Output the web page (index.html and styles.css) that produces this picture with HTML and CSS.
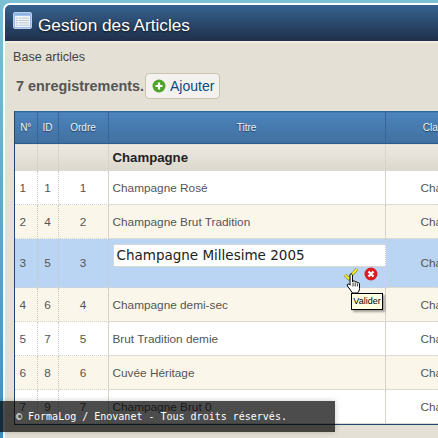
FILE: index.html
```html
<!DOCTYPE html>
<html lang="fr">
<head>
    <meta charset="UTF-8">
    <title>Gestion des Articles</title>
    <link rel="stylesheet" href="styles.css">
</head>
<body>
    <div class="window">
        <header class="title-bar">
            <svg class="title-icon" width="19" height="17" viewBox="0 0 20 18">
                <rect x="0.5" y="0.5" width="19" height="17" rx="1.5" fill="#8fb4e6" stroke="#c4d8f5"/>
                <rect x="2" y="4" width="16" height="12" fill="#f2f6fb"/>
                <path d="M6 6.5h11M6 9h11M6 11.5h11M6 14h11" stroke="#b9c4d4" stroke-width="1"/>
                <path d="M3 6.5h2M3 9h2M3 11.5h2M3 14h2" stroke="#9db7dc" stroke-width="1"/>
            </svg>
            <h1>Gestion des Articles</h1>
        </header>

        <div class="content">
            <p class="crumb">Base articles</p>
            <div class="toolbar">
                <span class="count">7 enregistrements.</span>
                <a class="btn-add" href="#">
                    <svg width="14" height="14" viewBox="0 0 14 14">
                        <circle cx="7" cy="7" r="6.5" fill="#4fa32b"/>
                        <path d="M7 3.5v7M3.5 7h7" stroke="#fff" stroke-width="2.2"/>
                    </svg>
                    Ajouter
                </a>
            </div>

            <div class="table-wrap">
                <table class="grid">
                    <colgroup>
                        <col class="col-num">
                        <col class="col-id">
                        <col class="col-order">
                        <col class="col-title">
                        <col class="col-class">
                    </colgroup>
                    <thead>
                        <tr>
                            <th>N°</th>
                            <th>ID</th>
                            <th>Ordre</th>
                            <th>Titre</th>
                            <th>Classe</th>
                        </tr>
                    </thead>
                    <tbody>
                        <tr class="group">
                            <td></td><td></td><td></td>
                            <td class="left">Champagne</td>
                            <td></td>
                        </tr>
                        <tr>
                            <td class="num">1</td><td>1</td><td>1</td>
                            <td class="left">Champagne Rosé</td>
                            <td class="left cls">Champagne</td>
                        </tr>
                        <tr class="alt">
                            <td class="num">2</td><td>4</td><td>2</td>
                            <td class="left">Champagne Brut Tradition</td>
                            <td class="left cls">Champagne</td>
                        </tr>
                        <tr class="editing">
                            <td class="num">3</td><td>5</td><td>3</td>
                            <td class="left edit-cell">
                                <div class="edit-box">Champagne Millesime 2005</div>
                                <div class="edit-actions">
                                    <svg width="16" height="14" viewBox="0 0 16 14">
                                        <path d="M2 8l3.5 3.5L14 2" fill="none" stroke="#6b6b20" stroke-width="3"/>
                                        <path d="M2 8l3.5 3.5L14 2" fill="none" stroke="#f2ee2a" stroke-width="2"/>
                                    </svg>
                                    <svg width="14" height="14" viewBox="0 0 14 14">
                                        <circle cx="7" cy="7" r="6.5" fill="#d81e1e"/>
                                        <path d="M4.5 4.5l5 5M9.5 4.5l-5 5" stroke="#fff" stroke-width="2.2"/>
                                    </svg>
                                </div>
                            </td>
                            <td class="left cls">Champagne</td>
                        </tr>
                        <tr class="alt">
                            <td class="num">4</td><td>6</td><td>4</td>
                            <td class="left">Champagne demi-sec</td>
                            <td class="left cls">Champagne</td>
                        </tr>
                        <tr>
                            <td class="num">5</td><td>7</td><td>5</td>
                            <td class="left">Brut Tradition demie</td>
                            <td class="left cls">Champagne</td>
                        </tr>
                        <tr class="alt">
                            <td class="num">6</td><td>8</td><td>6</td>
                            <td class="left">Cuvée Héritage</td>
                            <td class="left cls">Champagne</td>
                        </tr>
                        <tr>
                            <td class="num">7</td><td>9</td><td>7</td>
                            <td class="left">Champagne Brut 0</td>
                            <td class="left cls">Champagne</td>
                        </tr>
                    </tbody>
                </table>
            </div>
        </div>
    </div>

    <!-- curseur et infobulle au-dessus du tableau -->
    <svg class="cursor" width="18" height="22" viewBox="0 0 18 22">
        <path d="M4 1.5c1-1 2.500-.5 2.500 1V9l.5-1c1-.5 2 0 2 1 1-.7 2.200-.2 2.200.8 1-.5 2.300 0 2.300 1.200v4.500c0 2-1 3.500-2 4.500H6.500L1.500 13c-1-1.500.5-2.500 1.500-1.800l1 1V2.500z" fill="#fff" stroke="#000" stroke-width="1"/>
        <path d="M7 9.500v4M9.200 9.500v4M11.400 10.500v3" stroke="#000" stroke-width=".8"/>
    </svg>
    <div class="tooltip">Valider</div>

    <footer class="legal">© FormaLog / Enovanet - Tous droits réservés.</footer>
</body>
</html>
```

FILE: styles.css
```css
html, body {
    margin: 0;
    padding: 0;
    height: 438px;
    overflow: hidden;
}
body {
    position: relative;
    font-family: "Liberation Sans", Arial, sans-serif;
    background: linear-gradient(#7cc0d6, #3f8fc0);
    padding: 3px 0 0 3px;
    box-sizing: border-box;
}
.window {
    height: 435px;
    background-color: #e4e0d5;
    border-top: 2px solid #fff;
    border-left: 2px solid #fff;
    border-top-left-radius: 7px;
    overflow: hidden;
}
.title-bar {
    display: flex;
    align-items: center;
    gap: 6px;
    height: 36px;
    padding: 0 0 0 8px;
    background: linear-gradient(#36638f, #1f2f4b);
    border-bottom: 2px solid #f3ecdd;
}
.title-icon {
    margin-top: -5px;
}
.title-bar h1 {
    margin: 4px 0 0;
    font-size: 17.2px;
    font-weight: normal;
    color: #fff;
    text-shadow: 0 1px 2px #111;
}
.content {
    padding: 0 0 0 8px;
}
.crumb {
    margin: 0;
    padding-top: 7px;
    height: 15px;
    font-size: 12.6px;
    line-height: 15px;
    color: #444;
}
.toolbar {
    display: flex;
    align-items: center;
    height: 26px;
    margin-top: 8px;
    padding-left: 3px;
}
.count {
    font-size: 14.4px;
    font-weight: bold;
    color: #555;
}
.btn-add {
    display: flex;
    align-items: center;
    gap: 4px;
    height: 24px;
    margin-left: 1px;
    padding: 0 5px 0 6px;
    border: 1px solid #c9c4ad;
    border-radius: 4px;
    background-color: #f3f2ee;
    color: #0b4a82;
    font-size: 14px;
    text-decoration: none;
}
.table-wrap {
    margin-top: 12px;
    margin-left: 1px;
    overflow: hidden;
    border-left: 1px solid #24466e;
    border-bottom: 1px solid #24466e;
    width: 476px;
}
.grid {
    table-layout: fixed;
    border-collapse: collapse;
    width: 476px;
    font-size: 10px;
}
.col-num { width: 22px; }
.col-id { width: 21px; }
.col-order { width: 50px; }
.col-title { width: 277px; }
.col-class { width: 106px; }
.grid th {
    height: 32px;
    padding: 0;
    box-sizing: border-box;
    background: linear-gradient(#4c84bd, #41709f);
    border-top: 1px solid #2f689f;
    border-bottom: 1px solid #2b5c8f;
    border-right: 1px solid #34689d;
    color: #f0f4f8;
    font-weight: normal;
    text-shadow: 0 1px 1px #1c3a5c;
}
.grid td {
    height: 34px;
    padding: 0;
    box-sizing: border-box;
    text-align: center;
    border-right: 1px dotted #c9c9c4;
    border-bottom: 1px dotted #d5d5d0;
    background-color: #fff;
    color: #555;
    font-size: 11.8px;
    vertical-align: middle;
}
.grid td.num {
    padding-right: 6px;
}
.grid td.left {
    text-align: left;
    padding-left: 4px;
    white-space: nowrap;
    overflow: hidden;
}
.grid td.cls {
    padding-left: 35px;
}
.grid .alt td {
    background-color: #faf7ea;
}
.grid .group td {
    height: 27px;
    background: linear-gradient(#ede9e1, #dcd8cd);
    color: #222;
    font-size: 13.2px;
    font-weight: bold;
}
.grid .editing td {
    height: 49px;
    background-color: #b9d5f3;
}
.grid td.edit-cell {
    vertical-align: top;
    overflow: visible;
}
.edit-box {
    box-sizing: border-box;
    width: 274px;
    height: 23px;
    margin-top: 5px;
    padding-left: 3px;
    background-color: #fff;
    border: 1px solid #d8d8d0;
    border-radius: 2px;
    font-family: "DejaVu Sans", sans-serif;
    font-size: 13.5px;
    line-height: 21px;
    color: #222;
}
.edit-actions {
    display: flex;
    justify-content: flex-end;
    align-items: center;
    gap: 5px;
    width: 265px;
}
.cursor {
    position: absolute;
    left: 346px;
    top: 273px;
}
.tooltip {
    position: absolute;
    left: 351px;
    top: 293px;
    box-sizing: border-box;
    width: 32px;
    height: 17px;
    border: 1px solid #000;
    background-color: #ffffe1;
    box-shadow: 2px 2px 2px rgba(0, 0, 0, 0.35);
    font-size: 9px;
    line-height: 15px;
    text-align: center;
    color: #000;
}
.legal {
    position: absolute;
    left: 0;
    top: 401px;
    box-sizing: border-box;
    width: 335px;
    height: 31px;
    padding: 9px 0 0 16px;
    background-color: rgba(0, 0, 0, 0.7);
    box-shadow: 0 0 6px rgba(0, 0, 0, 0.2);
    font-family: "DejaVu Sans Mono", monospace;
    font-size: 10px;
    line-height: 14px;
    color: #fff;
}
```
